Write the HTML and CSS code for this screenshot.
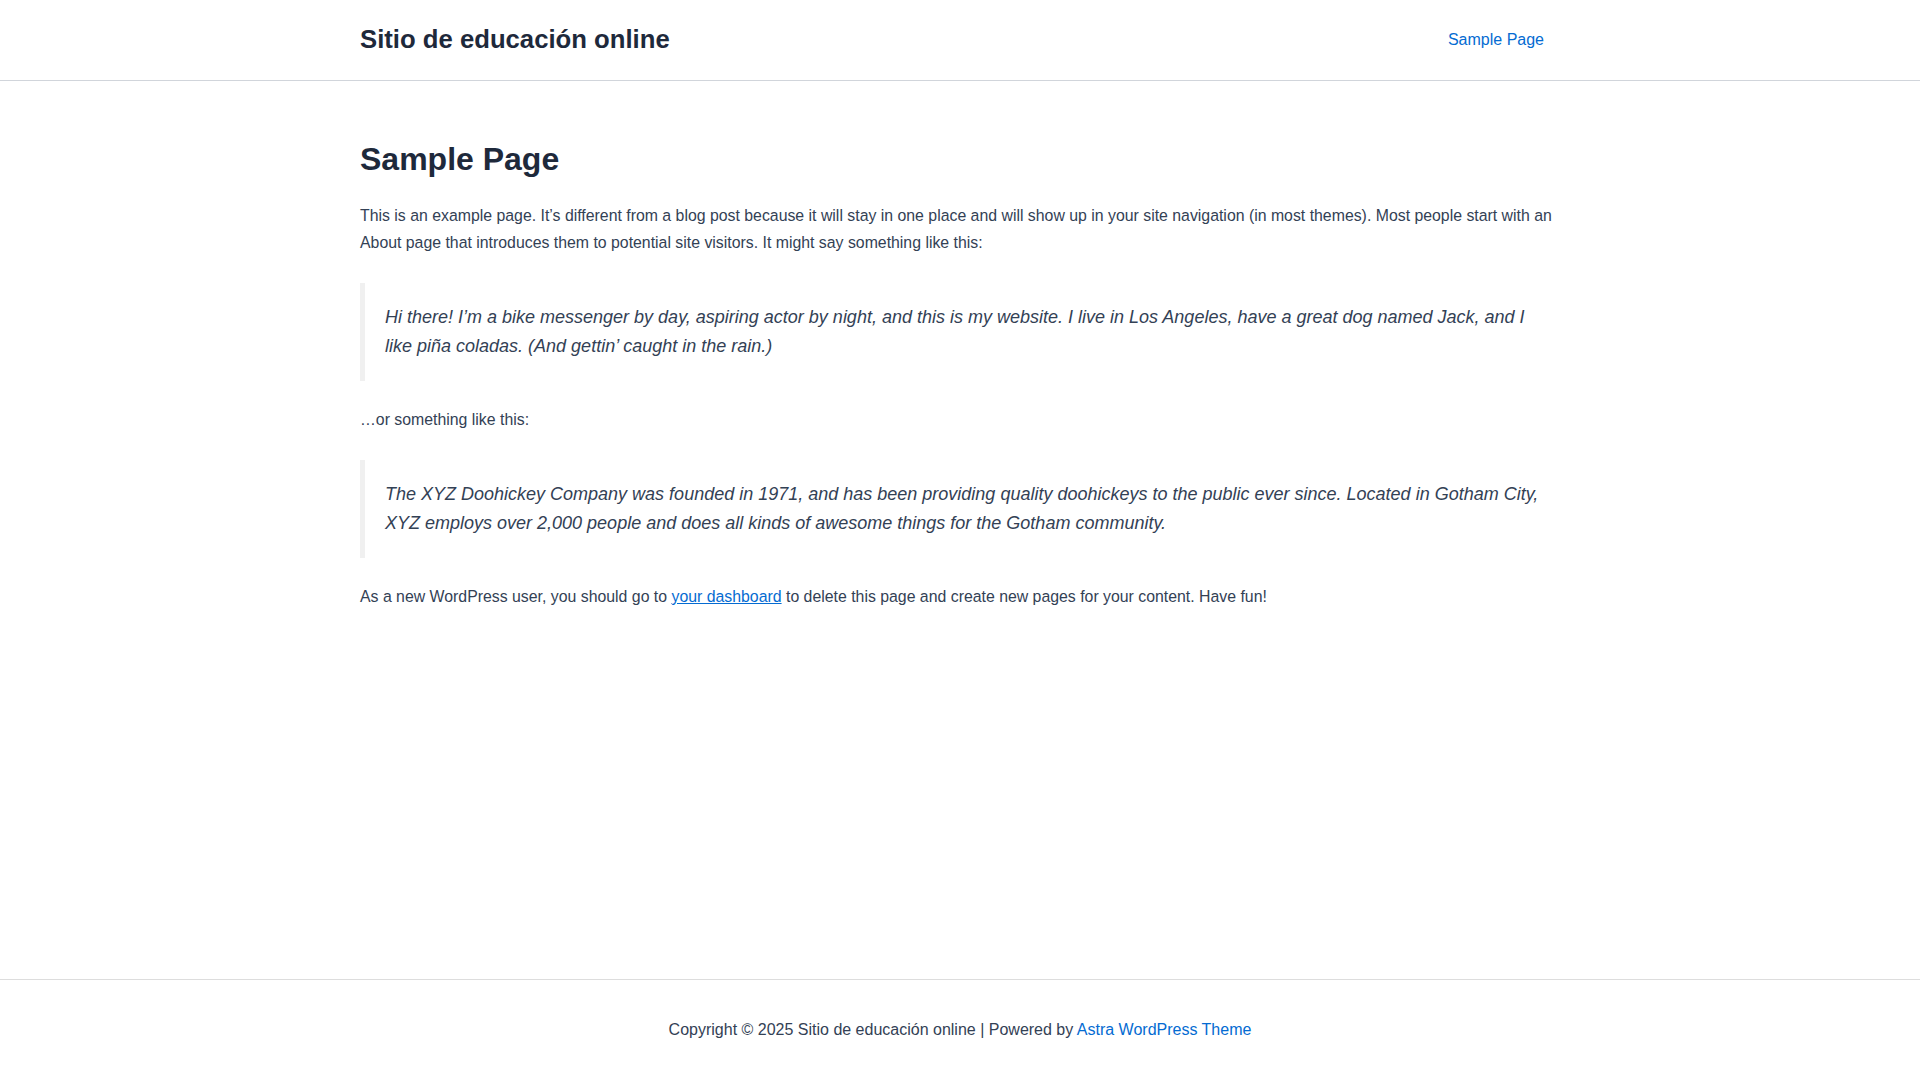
FILE: index.html
```html
<!DOCTYPE html>
<html lang="es">
<head>
<meta charset="utf-8">
<title>Sample Page – Sitio de educación online</title>
<link rel="stylesheet" href="styles.css">
</head>
<body>
<header class="site-header">
  <div class="container header-inner">
    <a class="site-title" href="#">Sitio de educación online</a>
    <nav class="main-nav">
      <a class="nav-link" href="#">Sample Page</a>
    </nav>
  </div>
</header>
<main class="site-content">
  <div class="container">
    <article class="entry">
      <h1 class="entry-title">Sample Page</h1>
      <div class="entry-content">
        <p>This is an example page. It’s different from a blog post because it will stay in one place and will show up in your site navigation (in most themes). Most people start with an About page that introduces them to potential site visitors. It might say something like this:</p>
        <blockquote class="quote"><p>Hi there! I’m a bike messenger by day, aspiring actor by night, and this is my website. I live in Los Angeles, have a great dog named Jack, and I like piña coladas. (And gettin’ caught in the rain.)</p></blockquote>
        <p>…or something like this:</p>
        <blockquote class="quote"><p>The XYZ Doohickey Company was founded in 1971, and has been providing quality doohickeys to the public ever since. Located in Gotham City, XYZ employs over 2,000 people and does all kinds of awesome things for the Gotham community.</p></blockquote>
        <p>As a new WordPress user, you should go to <a class="inline-link" href="#">your dashboard</a> to delete this page and create new pages for your content. Have fun!</p>
      </div>
    </article>
  </div>
</main>
<footer class="site-footer">
  <div class="container footer-inner">
    <p class="copyright">Copyright © 2025 Sitio de educación online | Powered by <a class="footer-link" href="#">Astra WordPress Theme</a></p>
  </div>
</footer>
</body>
</html>
```
FILE: styles.css
```css
* { box-sizing: border-box; }
html, body { margin: 0; padding: 0; }
body {
  font-family: "Liberation Sans", Arial, sans-serif;
  font-size: 16px;
  line-height: 27px;
  color: #334155;
  background: #ffffff;
  min-height: 100vh;
  display: flex;
  flex-direction: column;
}
a { text-decoration: none; }
.container {
  max-width: 1240px;
  margin: 0 auto;
  padding: 0 20px;
  width: 100%;
}
.site-header {
  border-bottom: 1px solid #d1d5db;
}
.header-inner {
  height: 80px;
  display: flex;
  align-items: center;
  justify-content: space-between;
}
.site-title {
  font-size: 25.7px;
  font-weight: 700;
  color: #1e293b;
  line-height: 1.2;
  padding-bottom: 2px;
}
.main-nav { display: flex; }
.nav-link {
  color: #046bd2;
  font-size: 16px;
  line-height: 24px;
  padding: 0 16px 1px;
}
.site-content { flex: 1; }
.entry { padding-top: 54px; }
.entry-title {
  margin: 0 0 18.5px;
  font-size: 32px;
  line-height: 48px;
  font-weight: 700;
  color: #1e293b;
}
.entry-content p {
  margin: 0 0 27.5px;
  font-size: 15.85px;
}
.quote {
  margin: 0 0 24.5px;
  border-left: 5px solid #f0f0f0;
  padding: 20px;
}
.entry-content .quote p {
  margin: 0;
  font-size: 18px;
  line-height: 29px;
  font-style: italic;
}
.inline-link {
  color: #046bd2;
  text-decoration: underline;
}
.site-footer {
  border-top: 1px solid #dddddd;
}
.footer-inner {
  height: 100px;
  padding-bottom: 2px;
  display: flex;
  align-items: center;
  justify-content: center;
}
.copyright { margin: 0; font-size: 16px; }
.footer-link { color: #046bd2; }
```
